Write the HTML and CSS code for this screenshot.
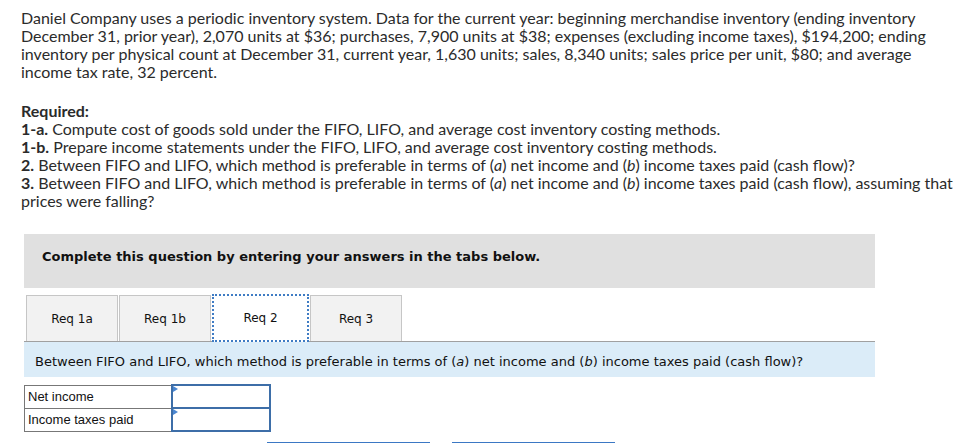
FILE: index.html
```html
<!DOCTYPE html>
<html>
<head>
<meta charset="utf-8">
<link rel="stylesheet" href="styles.css">
</head>
<body>
<div class="page">
  <p class="intro">Daniel Company uses a periodic inventory system. Data for the current year: beginning merchandise inventory (ending inventory December 31, prior year), 2,070 units at $36; purchases, 7,900 units at $38; expenses (excluding income taxes), $194,200; ending inventory per physical count at December 31, current year, 1,630 units; sales, 8,340 units; sales price per unit, $80; and average income tax rate, 32 percent.</p>
  <div class="required">
    <div class="req-title">Required:</div>
    <div><b>1-a.</b> Compute cost of goods sold under the FIFO, LIFO, and average cost inventory costing methods.</div>
    <div><b>1-b.</b> Prepare income statements under the FIFO, LIFO, and average cost inventory costing methods.</div>
    <div><b>2.</b> Between FIFO and LIFO, which method is preferable in terms of (<i>a</i>) net income and (<i>b</i>) income taxes paid (cash flow)?</div>
    <div><b>3.</b> Between FIFO and LIFO, which method is preferable in terms of (<i>a</i>) net income and (<i>b</i>) income taxes paid (cash flow), assuming that prices were falling?</div>
  </div>

  <div class="widget">
    <div class="banner">Complete this question by entering your answers in the tabs below.</div>
    <div class="tabs">
      <div class="tab">Req 1a</div>
      <div class="tab">Req 1b</div>
      <div class="tab active">Req 2</div>
      <div class="tab">Req 3</div>
    </div>
    <div class="prompt">Between FIFO and LIFO, which method is preferable in terms of (<i>a</i>) net income and (<i>b</i>) income taxes paid (cash flow)?</div>
    <table class="answers">
      <tr><td class="label">Net income</td><td class="input"><span class="marker"></span></td></tr>
      <tr><td class="label">Income taxes paid</td><td class="input"><span class="marker"></span></td></tr>
    </table>
    <div class="buttons">
      <div class="btn"></div>
      <div class="btn"></div>
    </div>
  </div>
</div>
</body>
</html>
```

FILE: styles.css
```css
html, body {
  margin: 0;
  padding: 0;
  background: #fff;
}
.page {
  padding: 9px 21px 0 21px;
  font-family: Lato, "Open Sans", sans-serif;
  font-size: 16px;
  line-height: 18px;
  color: #2b2b2b;
}
.intro {
  margin: 0;
  width: 935px;
}
.required {
  margin-top: 21px;
  width: 935px;
}
.req-title {
  font-weight: bold;
}
.required b {
  font-weight: bold;
}
.widget {
  margin-top: 24px;
  margin-left: 3px;
  width: 851px;
}
.banner {
  background: #e0e0e0;
  height: 54px;
  box-sizing: border-box;
  padding: 14px 18px 0 18px;
  font-family: "DejaVu Sans", Verdana, sans-serif;
  font-weight: bold;
  font-size: 13px;
  line-height: 18px;
  color: #111;
}
.tabs {
  display: flex;
  gap: 1px;
  padding-left: 2px;
  margin-top: 6px;
  align-items: flex-end;
}
.tab {
  width: 92px;
  height: 46px;
  box-sizing: border-box;
  background: #f2f2f2;
  border: 1px solid #c6c6c6;
  border-bottom: none;
  display: flex;
  align-items: center;
  justify-content: center;
  font-family: "DejaVu Sans", Verdana, sans-serif;
  font-size: 12px;
  color: #111;
}
.tab.active {
  background: #fff;
  width: 97px;
  height: 48px;
  border: 2px dotted #3f7cc4;
  margin-bottom: -1px;
}
.prompt {
  background: #dbecf8;
  border-top: 1px solid #a0a0a0;
  height: 36px;
  box-sizing: border-box;
  padding: 11px 11px 0 11px;
  font-family: "DejaVu Sans", Verdana, sans-serif;
  font-size: 13px;
  line-height: 18px;
  color: #111;
}
.answers {
  margin-top: 7px;
  border-collapse: collapse;
  font-family: "Liberation Sans", Arial, sans-serif;
  font-size: 13px;
  color: #111;
}
.answers td {
  height: 23px;
  padding: 0;
}
.answers .label {
  width: 147px;
  border: 1px solid #777;
  padding-left: 3px;
  box-sizing: border-box;
}
.answers .input {
  width: 98px;
  border: 2px solid #3d6ea8;
  position: relative;
  box-sizing: border-box;
}
.marker {
  position: absolute;
  left: 0;
  top: 0;
  width: 0;
  height: 0;
  border-top: 3px solid transparent;
  border-bottom: 3px solid transparent;
  border-left: 5px solid #4a86d0;
}
.buttons {
  display: flex;
  gap: 22px;
  margin-top: 10px;
  padding-left: 243px;
}
.btn {
  width: 163px;
  height: 10px;
  border-top: 2px solid #3b78c4;
}
```
